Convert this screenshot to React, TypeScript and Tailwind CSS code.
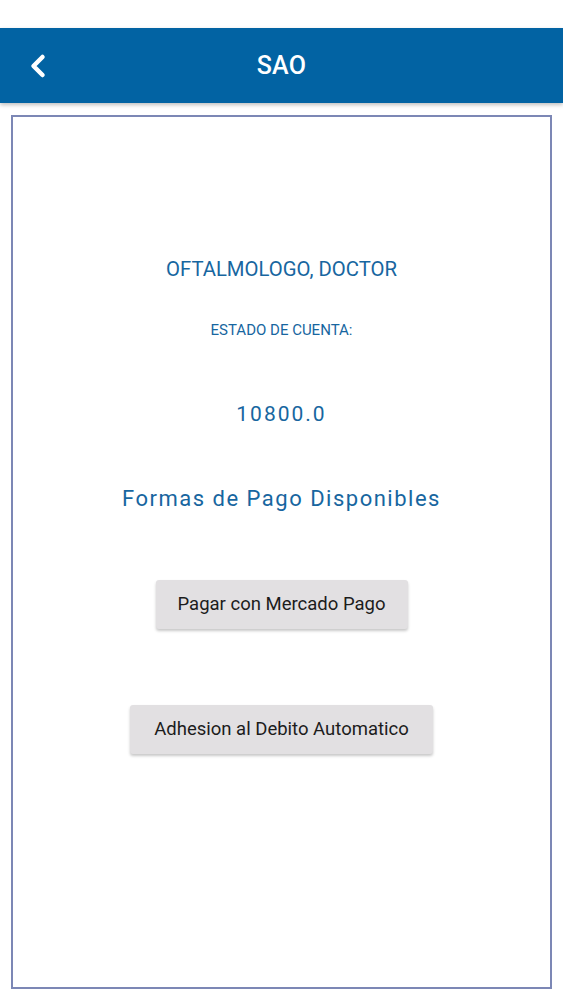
import { ChevronLeft } from 'lucide-react'

export default function App() {
  return (
    <div className="h-[1000px] w-[563px] bg-white flex flex-col font-['Roboto',sans-serif]">
      <div className="h-[28px] bg-white" />
      <header className="h-[75px] bg-[#0263a3] flex items-center relative shadow-[0_2px_4px_rgba(0,0,0,0.25)] z-10">
        <button className="absolute left-[20px] text-white">
          <ChevronLeft size={36} strokeWidth={3} />
        </button>
        <h1 className="flex-1 text-center text-white text-[25px] font-medium tracking-[0.3px]">SAO</h1>
      </header>
      <main className="mx-[11px] mt-[12px] mb-[11px] flex-1 border-2 border-[#7c87b5] flex flex-col items-center text-[#1766a0]">
        <p className="mt-[140px] text-[20.3px] leading-[24px]">OFTALMOLOGO, DOCTOR</p>
        <p className="mt-[40px] text-[15px] leading-[18px]">ESTADO DE CUENTA:</p>
        <p className="mt-[63px] text-[21px] leading-[24px] tracking-[2px]">10800.0</p>
        <p className="mt-[61px] text-[22px] leading-[24px] tracking-[1.5px]">Formas de Pago Disponibles</p>
        <button className="mt-[69px] h-[49px] w-[252px] bg-[#e2e0e2] text-[#1c1c1c] text-[18.5px] rounded-[3px] shadow-[0_2px_3px_rgba(0,0,0,0.22)]">
          Pagar con Mercado Pago
        </button>
        <button className="mt-[76px] h-[49px] w-[303px] bg-[#e2e0e2] text-[#1c1c1c] text-[18.5px] rounded-[3px] shadow-[0_2px_3px_rgba(0,0,0,0.22)]">
          Adhesion al Debito Automatico
        </button>
      </main>
    </div>
  )
}
